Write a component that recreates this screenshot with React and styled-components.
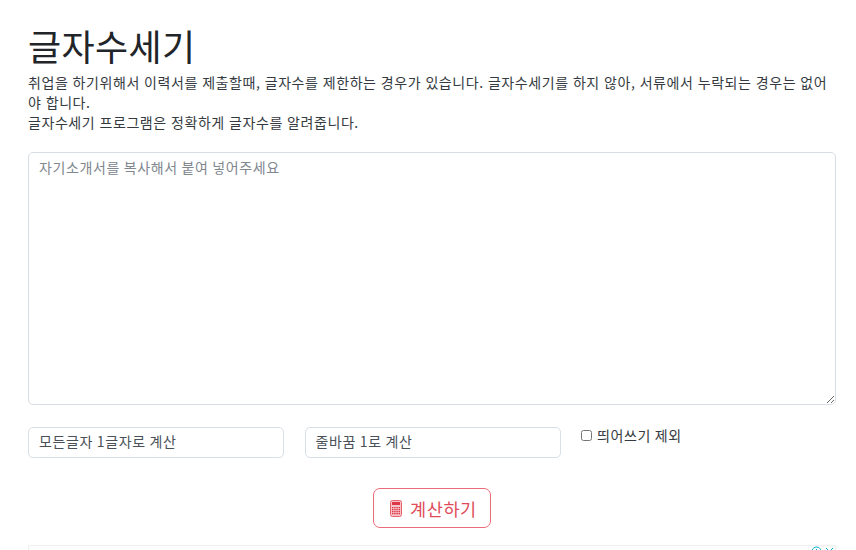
import styled, { createGlobalStyle } from 'styled-components';

const GlobalStyle = createGlobalStyle`
  html, body {
    margin: 0;
    height: 100%;
    overflow: hidden;
    background: #fff;
  }
  body {
    font-family: "Noto Sans CJK KR", "Liberation Sans", sans-serif;
    color: #212529;
  }
`;

const Page = styled.main`
  padding: 22px 20px 0 28px;
`;

const Title = styled.h1`
  margin: 0 0 4px;
  font-size: 36px;
  font-weight: 400;
  line-height: 46px;
  letter-spacing: 0.4px;
`;

const Intro = styled.p`
  margin: 0 0 20px;
  font-size: 14px;
  line-height: 20px;
  letter-spacing: 0.57px;
  word-spacing: 0.55px;
  word-break: break-all;
  color: #343a40;
`;

const Essay = styled.textarea`
  display: block;
  box-sizing: border-box;
  width: 100%;
  height: 253px;
  padding: 4px 10px;
  border: 1px solid #d8dde3;
  border-radius: 5px;
  font: inherit;
  font-size: 14px;
  line-height: 20px;
  letter-spacing: 0.62px;
  color: #495057;
  outline: none;

  &::placeholder {
    color: #80878e;
    opacity: 1;
  }
`;

const Options = styled.section`
  display: grid;
  grid-template-columns: 256px 256px 1fr;
  column-gap: 20.5px;
  margin-top: 22px;
`;

const Choice = styled.select`
  box-sizing: border-box;
  width: 100%;
  height: 31px;
  padding: 0 10px 3px;
  border: 1px solid #d8dfe6;
  border-radius: 5px;
  background: #fff;
  font: inherit;
  font-size: 14px;
  letter-spacing: 0.62px;
  color: #495057;
  appearance: none;
  outline: none;
`;

const CheckLabel = styled.label`
  display: flex;
  align-items: center;
  gap: 5px;
  height: 16px;
  font-size: 14px;
  line-height: 16px;
  letter-spacing: 0.62px;
  color: #343a40;
`;

const Check = styled.input`
  width: 11px;
  height: 11px;
  margin: 0;
`;

const Actions = styled.div`
  display: flex;
  justify-content: center;
  margin-top: 30px;
`;

const CalcButton = styled.button`
  display: flex;
  align-items: center;
  gap: 8px;
  box-sizing: border-box;
  width: 118px;
  height: 40px;
  padding: 0 0 0 16px;
  border: 1px solid #ea6c78;
  border-radius: 7px;
  background: #fff;
  color: #e04b59;
  font: inherit;
  font-size: 17.5px;
  letter-spacing: 0.6px;
`;

const AdFrame = styled.aside`
  position: relative;
  height: 120px;
  margin-top: 17px;
  border: 1px solid #f0f0f0;
`;

const AdMark = styled.div`
  position: absolute;
  top: 0;
  right: 0;
  display: flex;
  gap: 2px;
  color: #00aecd;
`;

const CalculatorIcon = () => (
  <svg width="12" height="17" viewBox="0 0 12 17" fill="none">
    <rect x="0.5" y="0.5" width="11" height="16" rx="2" fill="#f6c3c8" stroke="#e8606d" />
    <rect x="2" y="2" width="8" height="3" fill="#dc3545" />
    {[7, 9, 11, 13].map((y) =>
      [2, 4.2, 6.4, 8.6].map((x) => (
        <rect key={`${x}-${y}`} x={x} y={y} width="1.4" height="1.3" fill="#dc3545" />
      ))
    )}
  </svg>
);

export default function App() {
  return (
    <>
      <GlobalStyle />
      <Page>
        <Title>글자수세기</Title>
        <Intro>
          취업을 하기위해서 이력서를 제출할때, 글자수를 제한하는 경우가 있습니다. 글자수세기를 하지 않아, 서류에서 누락되는 경우는 없어야 합니다.
          <br />
          글자수세기 프로그램은 정확하게 글자수를 알려줍니다.
        </Intro>
        <Essay placeholder="자기소개서를 복사해서 붙여 넣어주세요" />
        <Options>
          <Choice>
            <option>모든글자 1글자로 계산</option>
          </Choice>
          <Choice>
            <option>줄바꿈 1로 계산</option>
          </Choice>
          <CheckLabel>
            <Check type="checkbox" />
            띄어쓰기 제외
          </CheckLabel>
        </Options>
        <Actions>
          <CalcButton type="button">
            <CalculatorIcon />
            계산하기
          </CalcButton>
        </Actions>
        <AdFrame>
          <AdMark>
            <svg width="11" height="11" viewBox="0 0 11 11" fill="none" stroke="currentColor">
              <circle cx="5.5" cy="5.5" r="4.5" />
              <path d="M5.5 5v3M5.5 3v1" />
            </svg>
            <svg width="11" height="11" viewBox="0 0 11 11" fill="none" stroke="currentColor">
              <path d="M2 2l7 7M9 2l-7 7" />
            </svg>
          </AdMark>
        </AdFrame>
      </Page>
    </>
  );
}
